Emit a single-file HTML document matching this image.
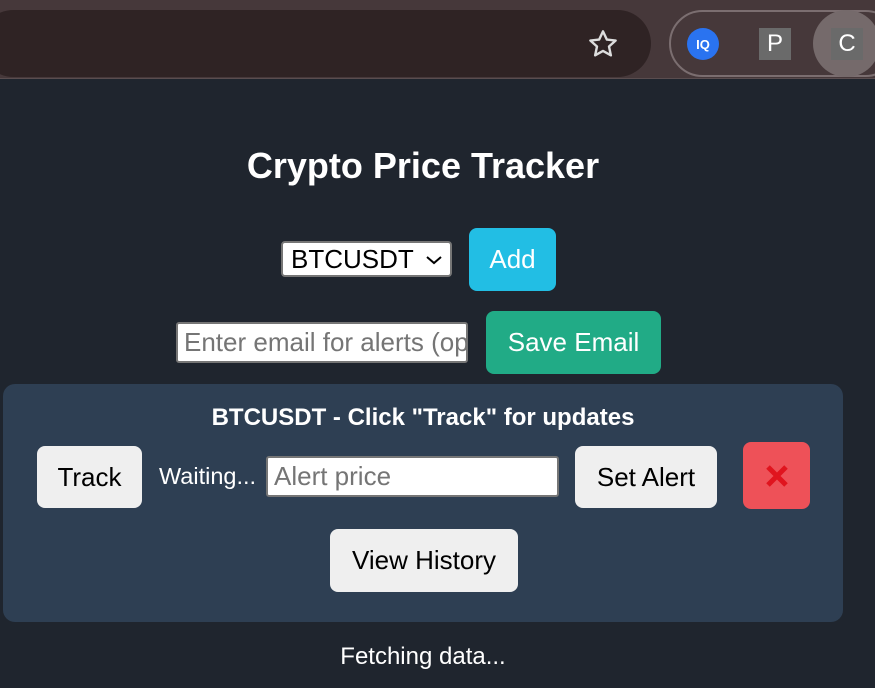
<!DOCTYPE html>
<html><head><meta charset="utf-8"><style>
*{box-sizing:border-box;margin:0;padding:0}
body{width:875px;height:688px;overflow:hidden;background:#1f252e;font-family:"Liberation Sans",sans-serif;position:relative;color:#fff}
.a{position:absolute}
.btn{position:absolute;border-radius:8px;display:flex;align-items:center;justify-content:center;font-size:26px}
.g{background:#efefef;color:#000}
.inp{position:absolute;background:#fff;border:2px solid #767676;border-radius:3px;font-size:26px;color:#757575;padding-left:6px;display:flex;align-items:center;white-space:nowrap;overflow:hidden}
</style></head><body>
<div class="a" style="left:0;top:0;width:875px;height:78px;background:#46383a"></div>
<div class="a" style="left:-20px;top:10px;width:671px;height:67px;background:#2f2324;border-radius:34px"></div>
<div class="a" style="left:0;top:78px;width:875px;height:1px;background:#5a4d4f"></div>
<svg class="a" style="left:586px;top:28px" width="34" height="32" viewBox="0 0 24 24"><path d="M12 2.5l2.9 6.2 6.6.7-5 4.5 1.4 6.6L12 17.2l-5.9 3.3 1.4-6.6-5-4.5 6.6-.7z" fill="none" stroke="#ddd" stroke-width="1.8" stroke-linejoin="round"/></svg>
<div class="a" style="left:669px;top:10px;width:230px;height:67px;border:2px solid #7b6e70;border-radius:34px"></div>
<div class="a" style="left:687px;top:28px;width:32px;height:32px;border-radius:50%;background:#2a73f0;color:#fff;font-size:13px;font-weight:bold;display:flex;align-items:center;justify-content:center">IQ</div>
<div class="a" style="left:759px;top:28px;width:32px;height:32px;background:#6a6a6a;color:#fff;font-size:24px;display:flex;align-items:center;justify-content:center">P</div>
<div class="a" style="left:813px;top:10px;width:67px;height:67px;border-radius:50%;background:#756a6b"></div>
<div class="a" style="left:831px;top:28px;width:32px;height:32px;background:#6a6a6a;color:#fff;font-size:24px;display:flex;align-items:center;justify-content:center">C</div>

<div class="a" style="left:0;top:145px;width:846px;text-align:center;font-size:36px;font-weight:bold">Crypto Price Tracker</div>
<div class="inp" style="left:281px;top:241px;width:171px;height:36px;color:#000;border-radius:4px;padding-left:8px">BTCUSDT<svg style="position:absolute;right:7px;top:11px" width="18" height="12" viewBox="0 0 18 12"><path d="M2 3l7 6 7-6" fill="none" stroke="#000" stroke-width="2"/></svg></div>
<div class="btn" style="left:469px;top:228px;width:87px;height:63px;background:#22bee4;color:#fff">Add</div>
<div class="inp" style="left:176px;top:322px;width:292px;height:41px">Enter email for alerts (optional)</div>
<div class="btn" style="left:486px;top:311px;width:175px;height:63px;background:#21ab86;color:#fff">Save Email</div>

<div class="a" style="left:3px;top:384px;width:840px;height:238px;background:#2e3f53;border-radius:12px"></div>
<div class="a" style="left:3px;top:404px;width:840px;text-align:center;font-size:24px;font-weight:bold">BTCUSDT - Click "Track" for updates</div>
<div class="btn g" style="left:37px;top:446px;width:105px;height:62px">Track</div>
<div class="a" style="left:159px;top:463px;font-size:23.5px">Waiting...</div>
<div class="inp" style="left:266px;top:456px;width:293px;height:41px">Alert price</div>
<div class="btn g" style="left:575px;top:446px;width:142px;height:62px">Set Alert</div>
<div class="btn" style="left:743px;top:442px;width:67px;height:67px;background:#ee5158"><svg width="26" height="26" viewBox="0 0 26 26"><path d="M4 4L22 22M22 4L4 22" stroke="#e0141e" stroke-width="5"/></svg></div>
<div class="btn g" style="left:330px;top:529px;width:188px;height:63px">View History</div>
<div class="a" style="left:0;top:643px;width:846px;text-align:center;font-size:24px">Fetching data...</div>
</body></html>
